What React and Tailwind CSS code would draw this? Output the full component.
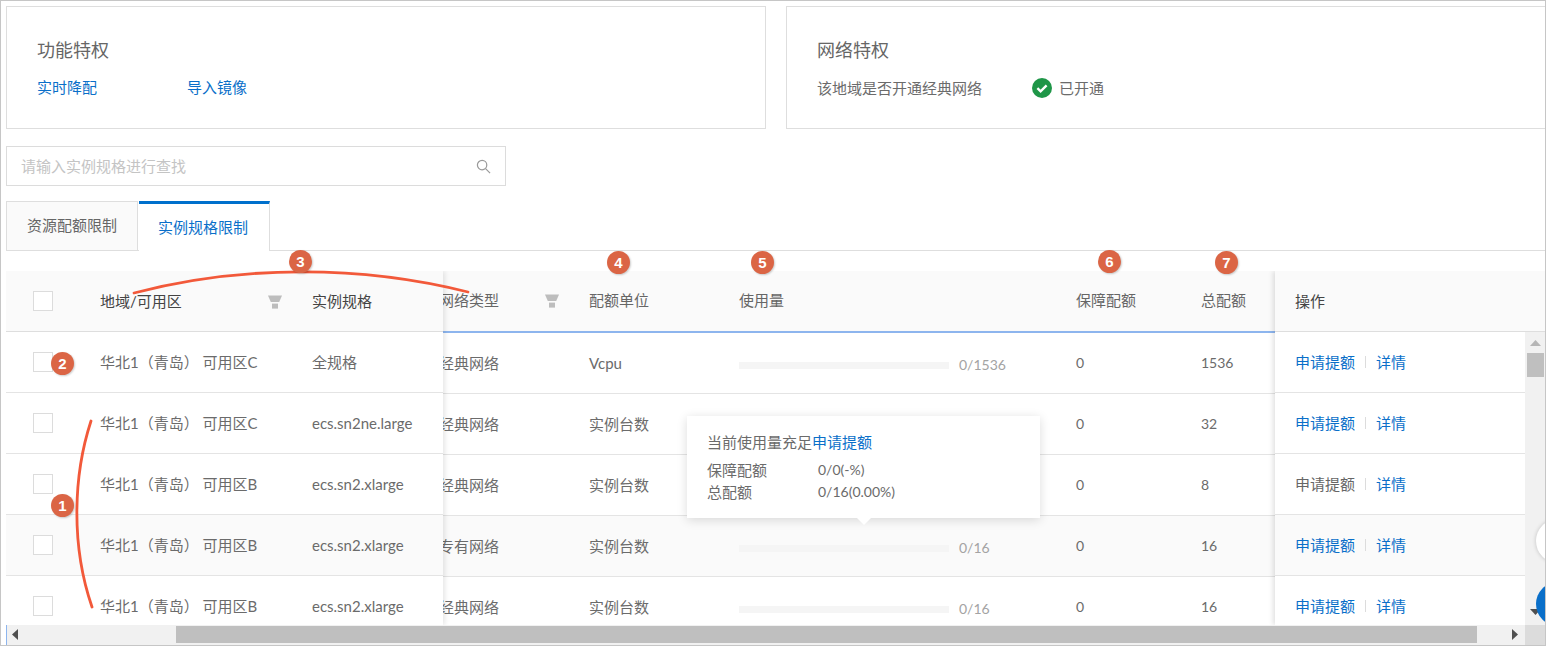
const FONT = "font-['Lato','Noto_Sans_CJK_SC',sans-serif]";

const rows = [
  { zone: "可用区C", spec: "全规格", net: "经典网络", unit: "Vcpu", used: "0/1536", keep: "0", total: "1536" },
  { zone: "可用区C", spec: "ecs.sn2ne.large", net: "经典网络", unit: "实例台数", used: "0/32", keep: "0", total: "32" },
  { zone: "可用区B", spec: "ecs.sn2.xlarge", net: "经典网络", unit: "实例台数", used: "0/8", keep: "0", total: "8", greyLink: true },
  { zone: "可用区B", spec: "ecs.sn2.xlarge", net: "专有网络", unit: "实例台数", used: "0/16", keep: "0", total: "16", shaded: true },
  { zone: "可用区B", spec: "ecs.sn2.xlarge", net: "经典网络", unit: "实例台数", used: "0/16", keep: "0", total: "16" },
];

function Funnel({ className }) {
  return (
    <svg viewBox="0 0 14 14" className={className} fill="#bdbdbd">
      <path d="M0 0.5h14l-2.8 6.5H2.8z" />
      <rect x="4" y="8.6" width="6" height="5" />
    </svg>
  );
}

function Box() {
  return <span className="block w-5 h-5 bg-white border border-[#dcdcdc] shrink-0" />;
}

function Badge({ n, className }) {
  return (
    <span className={`absolute flex items-center justify-center w-[23px] h-[23px] rounded-full bg-[#db6545] text-white text-[15px] font-bold shadow-[1px_1px_2px_rgba(0,0,0,0.2)] font-['Liberation_Sans',sans-serif] ${className}`}>
      {n}
    </span>
  );
}

function Tri({ dir }) {
  const d = { up: "M0 8 L5.5 2 L11 8z", down: "M0 2 L11 2 L5.5 8z", left: "M8 0 L8 11 L2 5.5z", right: "M2 0 L2 11 L8 5.5z" }[dir];
  return (
    <svg viewBox="0 0 11 11" className="w-[11px] h-[11px]" fill={dir === "up" ? "#b5b5b5" : "#505050"}>
      <path d={d} />
    </svg>
  );
}

function Region({ zone }) {
  return (
    <div className="w-[212px] whitespace-nowrap">
      华北1<span className="font-['Noto_Sans_CJK_TC',sans-serif]">（</span>青岛<span className="font-['Noto_Sans_CJK_TC',sans-serif]">）</span> {zone}
    </div>
  );
}

export default function App() {
  return (
    <div className={`relative w-[1546px] h-[646px] overflow-hidden bg-white border border-[#c6c6c6] pl-[5px] pt-[5px] flex flex-col text-[15px] leading-[20px] text-[#6b6b6b] ${FONT}`}>
      {/* privilege cards */}
      <div className="flex gap-5 shrink-0 w-[1560px]">
        <div className="w-[760px] h-[123px] border border-[#dedede] pl-[30px] pt-[31px] shrink-0">
          <div className="text-[18px] leading-[24px] text-[#666]">功能特权</div>
          <div className="flex mt-[15px] text-[#0a6fc9]">
            <span className="w-[150px]">实时降配</span>
            <span>导入镜像</span>
          </div>
        </div>
        <div className="w-[774px] h-[123px] border border-[#dedede] pl-[30px] pt-[31px] shrink-0">
          <div className="text-[18px] leading-[24px] text-[#666]">网络特权</div>
          <div className="flex items-center mt-[15px]">
            <span className="w-[215px]">该地域是否开通经典网络</span>
            <svg viewBox="0 0 20 20" className="w-5 h-5 mr-[7px]">
              <circle cx="10" cy="10" r="10" fill="#1f9648" />
              <path d="M5.4 10.2l3.2 3.1 6-6" fill="none" stroke="#fff" strokeWidth="2.4" />
            </svg>
            <span className="mt-[1px]">已开通</span>
          </div>
        </div>
      </div>

      {/* search */}
      <div className="mt-[17px] w-[500px] h-10 shrink-0 border border-[#dcdcdc] flex items-center justify-between pl-[14px] pr-[14px]">
        <span className="text-[#c4c4c4]">请输入实例规格进行查找</span>
        <svg viewBox="0 0 16 16" className="w-[15px] h-[15px]" fill="none" stroke="#9a9a9a" strokeWidth="1.3">
          <circle cx="6.5" cy="6.5" r="5" />
          <path d="M10.2 10.2L15 15" />
        </svg>
      </div>

      {/* tabs */}
      <div className="mt-[15px] h-[50px] shrink-0 flex border-b border-[#dedede] mr-[-1px]">
        <div className="w-[132px] h-[49px] border border-b-0 border-[#dedede] bg-[#fafafa] flex items-center justify-center text-[#666] pb-[2px]">资源配额限制</div>
        <div className="ml-[1px] w-[131px] h-[50px] border-t-[3px] border-t-[#0070cc] border-r border-r-[#dedede] bg-white flex items-center justify-center text-[#0a6fc9] pb-[2px] pr-[2px]">实例规格限制</div>
      </div>

      {/* table */}
      <div className="mt-5 h-[354px] shrink-0 flex overflow-hidden">
        {/* fixed left */}
        <div className="w-[437px] shrink-0 relative z-10 bg-white shadow-[2px_0_5px_rgba(0,0,0,0.1)]">
          <div className="h-[61px] flex items-center bg-[#fafafa] border-b border-[#dedede] text-[#444]">
            <div className="w-[94px] pl-[27px]"><Box /></div>
            <div className="w-[212px] flex items-center">
              <span className="w-[168px]">地域/可用区</span>
              <Funnel className="w-[14px] h-[14px] mt-[2px]" />
            </div>
            <div>实例规格</div>
          </div>
          {rows.map((r, i) => (
            <div key={i} className={`h-[61px] flex items-center border-b border-[#e4e4e4] ${r.shaded ? "bg-[#fafafa]" : "bg-white"}`}>
              <div className="w-[94px] pl-[27px]"><Box /></div>
              <Region zone={r.zone} />
              <div className="whitespace-nowrap">{r.spec}</div>
            </div>
          ))}
        </div>

        {/* scrolling middle */}
        <div className="flex-1 min-w-0 overflow-hidden">
          <div className="h-[62px] flex items-center bg-[#fafafa] border-b-[2px] border-[#8db5ee] pb-[2px] text-[#666]">
            <div className="w-[126px] shrink-0 flex items-center">
              <span className="ml-[-4px]">网络类型</span>
              <Funnel className="w-[14px] h-[14px] ml-[46px] mt-[2px]" />
            </div>
            <div className="w-[150px] shrink-0 pl-5">配额单位</div>
            <div className="w-[337px] shrink-0 pl-5">使用量</div>
            <div className="w-[125px] shrink-0 pl-5">保障配额</div>
            <div className="w-[94px] shrink-0 pl-5">总配额</div>
          </div>
          {rows.map((r, i) => (
            <div key={i} className={`h-[61px] flex items-center border-b border-[#e4e4e4] ${r.shaded ? "bg-[#fafafa]" : "bg-white"}`}>
              <div className="w-[126px] shrink-0"><span className="ml-[-4px] block">{r.net}</span></div>
              <div className="w-[150px] shrink-0 pl-5">{r.unit}</div>
              <div className="w-[337px] shrink-0 pl-5 flex items-center pt-[5px]">
                <div className="w-[210px] h-[7px] bg-[#f5f5f5]" />
                <span className="ml-[10px] text-[14px] text-[#a3a3a3] mt-[-2px]">{r.used}</span>
              </div>
              <div className="w-[125px] shrink-0 pl-5 text-[14px]">{r.keep}</div>
              <div className="w-[94px] shrink-0 pl-5 text-[14px]">{r.total}</div>
            </div>
          ))}
        </div>

        {/* fixed right */}
        <div className="w-[270px] shrink-0 relative z-10 bg-white shadow-[-2px_0_5px_rgba(0,0,0,0.12)]">
          <div className="h-[61px] flex items-center bg-[#fafafa] border-b border-[#dedede] pl-5 text-[#444]">操作</div>
          <div className="flex">
            <div className="w-[250px] shrink-0">
              {rows.map((r, i) => (
                <div key={i} className={`h-[61px] flex items-center border-b border-[#e4e4e4] pl-5 ${r.shaded ? "bg-[#fafafa]" : "bg-white"}`}>
                  <span className={r.greyLink ? "text-[#666]" : "text-[#0a6fc9]"}>申请提额</span>
                  <span className="mx-[10px] w-px h-3 bg-[#dcdcdc]" />
                  <span className="text-[#0a6fc9]">详情</span>
                </div>
              ))}
            </div>
            <div className="w-5 h-[293px] bg-[#f1f1f1] flex flex-col items-center pt-[6px] relative">
              <Tri dir="up" />
              <div className="mt-[4px] w-[17px] h-6 bg-[#bfbfbf]" />
              <div className="mt-auto mb-[7px]"><Tri dir="down" /></div>
            </div>
          </div>
        </div>
      </div>

      {/* horizontal scrollbar */}
      <div className="h-5 shrink-0 flex border-l border-[#8db5ee] bg-[#f1f1f1]">
        <div className="w-[1518px] flex items-center relative">
          <div className="absolute left-[3px] top-[4px]"><Tri dir="left" /></div>
          <div className="ml-[169px] mb-[2px] w-[1301px] h-[17px] bg-[#bfbfbf]" />
          <div className="absolute right-[4px] top-[4px]"><Tri dir="right" /></div>
        </div>
        <div className="flex-1 bg-[#dcdcdc]" />
      </div>

      {/* tooltip */}
      <div className="absolute left-[686px] top-[415px] w-[353px] h-[102px] z-20 bg-white shadow-[0_2px_10px_rgba(0,0,0,0.14)] pl-5 pt-[16px]">
        <div>当前使用量充足<span className="text-[#0a6fc9]">申请提额</span></div>
        <div className="flex mt-[7px] leading-[22px]"><span className="w-[111px]">保障配额</span><span className="text-[14px]">0/0(-%)</span></div>
        <div className="flex leading-[22px]"><span className="w-[111px]">总配额</span><span className="text-[14px]">0/16(0.00%)</span></div>
        <span className="absolute left-[170px] bottom-[-7px] w-0 h-0 border-x-[7px] border-x-transparent border-t-[7px] border-t-white" />
      </div>

      {/* floating page buttons */}
      <span className="absolute z-30 left-[1535px] top-[518px] w-11 h-11 rounded-full bg-white shadow-[0_0_4px_rgba(0,0,0,0.2)]" />
      <span className="absolute z-30 left-[1535px] top-[581px] w-11 h-11 rounded-full bg-[#0a6fc9]" />

      {/* annotations */}
      <svg className="absolute left-0 top-0 z-30 pointer-events-none" width="1546" height="646" fill="none" stroke="#f2593a" strokeWidth="2.8" strokeLinecap="round">
        <path d="M90 420 C72 475 70 545 91 606" />
        <path d="M133 292 C240 264 360 264 467 291" />
      </svg>
      <Badge n="1" className="z-40 left-[50px] top-[493px]" />
      <Badge n="2" className="z-40 left-[50px] top-[351px]" />
      <Badge n="3" className="z-40 left-[288px] top-[249px]" />
      <Badge n="4" className="z-40 left-[606px] top-[250px]" />
      <Badge n="5" className="z-40 left-[750px] top-[250px]" />
      <Badge n="6" className="z-40 left-[1097px] top-[249px]" />
      <Badge n="7" className="z-40 left-[1214px] top-[250px]" />
    </div>
  );
}
